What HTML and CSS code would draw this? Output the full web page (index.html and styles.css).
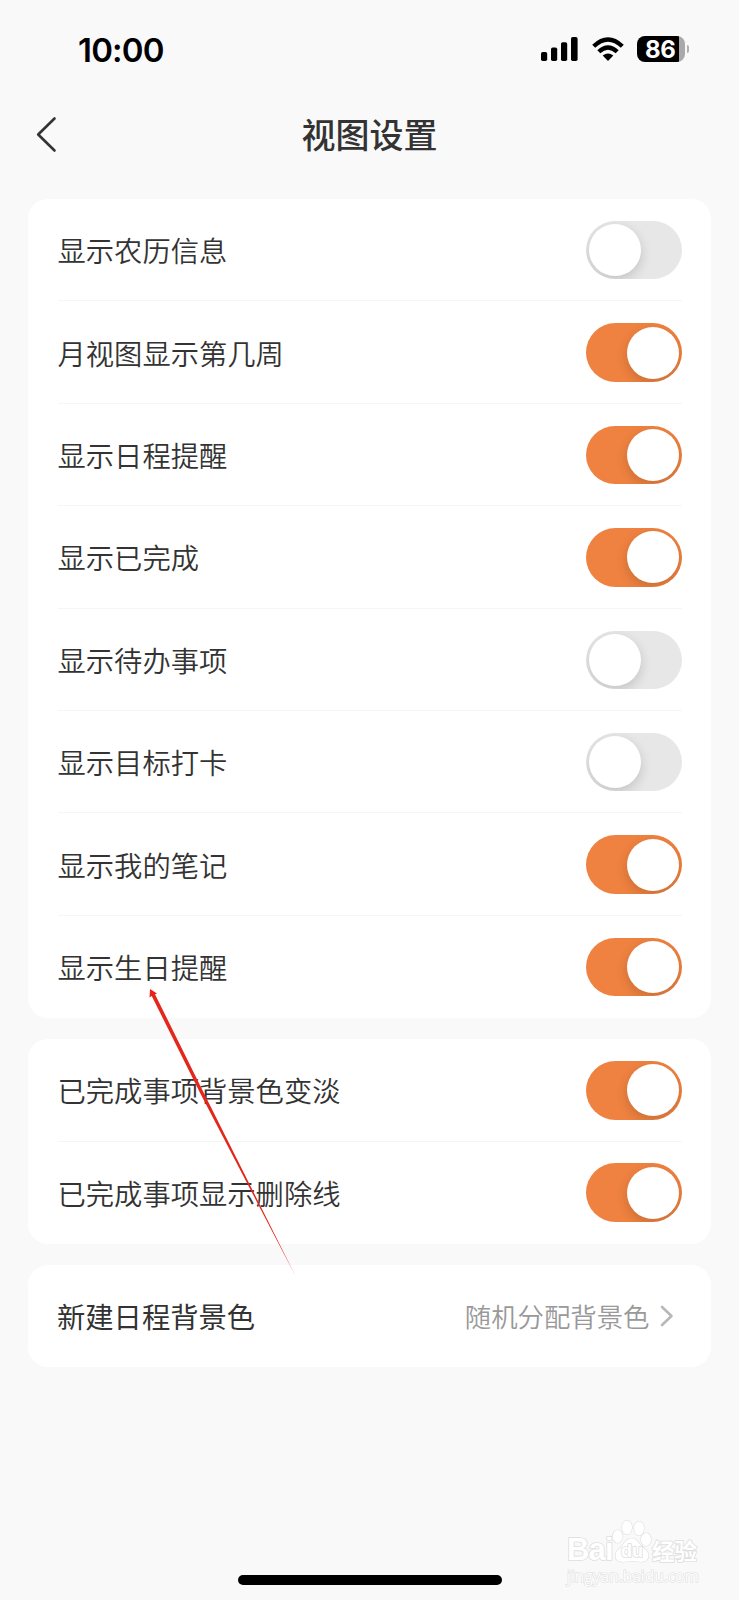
FILE: index.html
```html
<!DOCTYPE html>
<html lang="zh-CN">
<head>
<meta charset="utf-8">
<title>视图设置</title>
<link rel="stylesheet" href="styles.css">
</head>
<body>
<div class="screen">
  <header class="status">
    <span class="time">10:00</span>
    <div class="indicators">
      <svg class="signal" width="38" height="26" viewBox="0 0 38 26">
        <rect x="0" y="16" width="6.2" height="9" rx="1.7"/>
        <rect x="10" y="11.5" width="6.2" height="13.5" rx="1.7"/>
        <rect x="20" y="6.3" width="6.2" height="18.7" rx="1.7"/>
        <rect x="30" y="1" width="6.6" height="24" rx="1.7"/>
      </svg>
      <svg class="wifi" width="32" height="26" viewBox="0 0 32 26">
        <g fill="none" stroke="#000" stroke-width="4.3">
          <path d="M1.7 10.3Q16-3.2 30.3 10.3"/>
          <path d="M6.8 15.7Q16 7.1 25.2 15.7"/>
        </g>
        <path d="M10.7 19.6Q16 15.3 21.3 19.6L16 25Z"/>
      </svg>
      <div class="battery"><span class="battery-level">86</span></div>
      <span class="battery-cap"></span>
    </div>
  </header>

  <nav class="nav">
    <svg class="back" width="22" height="38" viewBox="0 0 22 38"><path d="M18.5 3.500L2.200 19.500L18.500 35.500"/></svg>
    <h1 class="title">视图设置</h1>
  </nav>

  <main class="groups">
    <section class="card">
      <div class="row"><span class="label">显示农历信息</span><span class="switch"></span></div>
      <div class="row"><span class="label">月视图显示第几周</span><span class="switch on"></span></div>
      <div class="row"><span class="label">显示日程提醒</span><span class="switch on"></span></div>
      <div class="row"><span class="label">显示已完成</span><span class="switch on"></span></div>
      <div class="row"><span class="label">显示待办事项</span><span class="switch"></span></div>
      <div class="row"><span class="label">显示目标打卡</span><span class="switch"></span></div>
      <div class="row"><span class="label">显示我的笔记</span><span class="switch on"></span></div>
      <div class="row"><span class="label">显示生日提醒</span><span class="switch on"></span></div>
    </section>
    <section class="card">
      <div class="row"><span class="label">已完成事项背景色变淡</span><span class="switch on"></span></div>
      <div class="row"><span class="label">已完成事项显示删除线</span><span class="switch on"></span></div>
    </section>
    <section class="card">
      <div class="row">
        <span class="label strong">新建日程背景色</span>
        <span class="value"><span class="value-text">随机分配背景色</span>
          <svg class="chevron" width="14" height="24" viewBox="0 0 14 24"><path d="M2 3L11.5 12L2 21"/></svg>
        </span>
      </div>
    </section>
  </main>

  <svg class="pointer" width="160" height="300" viewBox="0 0 160 300">
    <path d="M10 9L17 13.500L15 14.200L63.600 112.400L156 297L60.600 113.900L11.700 15.900L9.500 17.500Z"/>
  </svg>

  <div class="watermark">
    <div class="brand">
      <span class="bai">Bai</span>
      <span class="paw">
        <svg width="40" height="46" viewBox="0 0 40 46">
          <ellipse cx="5.700" cy="17.500" rx="5" ry="6.500"/>
          <ellipse cx="15" cy="8.500" rx="5" ry="7"/>
          <ellipse cx="27" cy="9.500" rx="5" ry="7"/>
          <ellipse cx="34" cy="20.500" rx="5" ry="6.500"/>
          <path d="M11.500 25C16 17.500 23 17.500 27 24C30 29 36.500 31 36.500 36.500C36 43 30 43.500 26 42.500Q20 41.500 15 42.500C9 43.500 3.500 43 3.500 36.500C3.500 31 8.500 30 11.500 25Z"/>
        </svg>
        <span class="du">du</span>
      </span>
      <span class="jingyan">经验</span>
    </div>
    <div class="site">jingyan.baidu.com</div>
  </div>

  <div class="home-bar"></div>
</div>
</body>
</html>
```
FILE: styles.css
```css
* { box-sizing: border-box; }

body {
  margin: 0;
  background: #f9f9f9;
  color: #333;
  font-family: "Noto Sans CJK SC", sans-serif;
}

.screen {
  position: relative;
  width: 739px;
  height: 1600px;
  overflow: hidden;
}

.status {
  display: flex;
  justify-content: space-between;
  align-items: center;
  height: 98px;
  padding: 0 50px 0 78px;
}

.time {
  padding-top: 1px;
  color: #000;
  font: 600 33px/40px Inter, sans-serif;
  letter-spacing: -0.8px;
}

.indicators { display: flex; align-items: center; }
.signal { margin-right: 13px; }
.wifi { margin-right: 13px; }

.battery {
  width: 48px;
  height: 26px;
  border-radius: 8px;
  background: linear-gradient(90deg, #000 42px, #a9a9a9 42px);
}

.battery-level {
  display: block;
  padding-left: 8px;
  color: #fff;
  font: 700 24px/27px Inter, sans-serif;
  letter-spacing: -0.4px;
}

.battery-cap {
  width: 2px;
  height: 8px;
  margin-left: 2px;
  border-radius: 0 3px 3px 0;
  background: #b0b0b0;
}

.nav {
  display: grid;
  grid-template-columns: 60px 1fr 60px;
  align-items: center;
  height: 101px;
  padding-bottom: 29px;
}

.back { margin-left: 36px; }

.back path {
  fill: none;
  stroke: #333;
  stroke-width: 2.6;
  stroke-linecap: round;
  stroke-linejoin: round;
}

.title {
  margin: 0;
  padding-bottom: 1px;
  font-size: 34px;
  font-weight: 500;
  line-height: 50px;
  text-align: center;
}

.groups {
  display: flex;
  flex-direction: column;
  gap: 21px;
  padding: 0 28px;
}

.card {
  padding: 0 29px 0 29.5px;
  border-radius: 20px;
  background: #fff;
}

.row {
  display: flex;
  justify-content: space-between;
  align-items: center;
  height: 102.4px;
}

.row + .row { box-shadow: 0 -1px #f5f5f5; }

.label {
  font-size: 28.3px;
  font-weight: 350;
  line-height: 42px;
}

.strong { margin-left: -0.5px; font-weight: 400; }

.switch {
  display: flex;
  width: 96.5px;
  height: 58.5px;
  padding: 3.3px;
  border-radius: 30px;
  background: #e7e7e7;
  overflow: hidden;
}

.switch::before {
  content: "";
  width: 52px;
  height: 52px;
  border-radius: 50%;
  background: #fff;
  box-shadow: 0 4px 12px rgba(0, 0, 0, 0.16);
}

.on { justify-content: flex-end; background: #ef8240; }

.value {
  display: flex;
  align-items: center;
  gap: 10px;
  padding-right: 8.5px;
  color: #999;
  font-size: 26.4px;
  font-weight: 350;
}

.value-text { padding-bottom: 2px; }

.chevron path {
  fill: none;
  stroke: #b8b8b8;
  stroke-width: 2.6;
  stroke-linecap: round;
  stroke-linejoin: round;
}

.pointer {
  position: absolute;
  left: 140px;
  top: 980px;
  fill: #e4271b;
}

.watermark {
  position: absolute;
  left: 567px;
  top: 1519px;
  color: #fff;
  -webkit-text-stroke: 1.6px #dedede;
  paint-order: stroke fill;
}

.brand { display: flex; height: 46px; align-items: flex-end; }
.bai { width: 45px; font: 700 31px/30px "Liberation Sans", sans-serif; letter-spacing: -0.8px; }

.paw { position: relative; width: 40px; height: 46px; }
.paw svg { fill: #fff; stroke: #dedede; stroke-width: 1.2; }

.du {
  position: absolute;
  left: 9px;
  top: 21px;
  font: 700 18px/22px "Liberation Sans", sans-serif;
}

.jingyan {
  font-size: 22.5px;
  font-weight: 700;
  line-height: 30px;
}

.site {
  font: 15.5px/22px "Open Sans", sans-serif;
  -webkit-text-stroke-width: 1.2px;
}

.home-bar {
  position: absolute;
  left: 238px;
  top: 1575px;
  width: 264px;
  height: 10px;
  border-radius: 5px;
  background: #000;
}
```
